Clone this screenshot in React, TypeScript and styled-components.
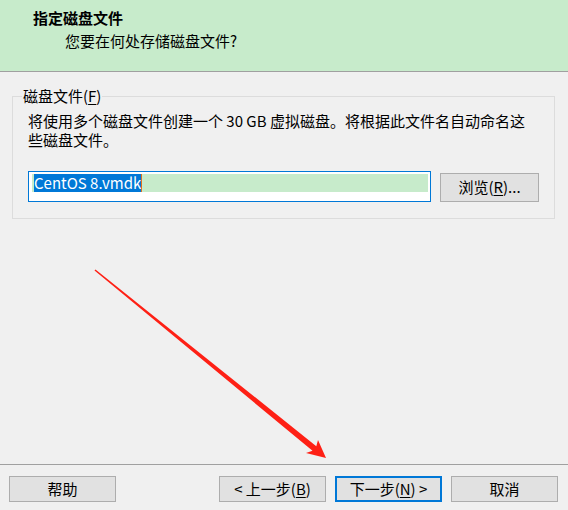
import React from "react";
import styled, { createGlobalStyle } from "styled-components";

const GlobalStyle = createGlobalStyle`
  html, body {
    margin: 0;
    padding: 0;
    background: #f0f0f0;
  }
  body {
    font-family: "Noto Sans CJK SC", "Noto Sans", sans-serif;
    font-size: 15px;
    color: #000;
  }
`;

const Window = styled.div`
  position: relative;
  width: 568px;
  height: 510px;
  display: flex;
  flex-direction: column;
  background: #f0f0f0;
  overflow: hidden;
`;

const Header = styled.div`
  height: 72px;
  box-sizing: border-box;
  padding: 8px 0 0 33px;
  background: #c7ebcb;
  border-bottom: 1px solid #a0a0a0;
`;

const Title = styled.div`
  font-weight: bold;
  line-height: 20px;
`;

const Subtitle = styled.div`
  margin: 3px 0 0 32px;
  line-height: 20px;
`;

const Body = styled.div`
  flex: 1;
  padding: 16px 13px 0 12px;
`;

const Group = styled.fieldset`
  margin: 0;
  padding: 7px 15px 16px 15px;
  border: 1px solid #dcdcdc;
  min-width: 0;
`;

const Legend = styled.legend`
  margin-left: -6px;
  padding: 0 1px;
  line-height: 16px;
`;

const Hotkey = styled.span`
  text-decoration: underline;
  text-underline-offset: 2px;
`;

const Info = styled.p`
  margin: 0;
  line-height: 19px;
`;

const FileRow = styled.div`
  display: flex;
  align-items: center;
  gap: 9px;
  margin-top: 22px;
`;

const PathBox = styled.div`
  flex: 1;
  height: 31px;
  box-sizing: border-box;
  border: 1px solid #0078d7;
  background: #fff;
  padding: 2px 2px 0 3px;
`;

const Highlight = styled.div`
  height: 18px;
  background: #c7ebcb;
  padding-left: 2px;
  display: flex;
`;

const Selected = styled.span`
  background: #0078d7;
  color: #fff;
  line-height: 18px;
  border-right: 1px solid #e07020;
  font-family: "Segoe UI", "Noto Sans CJK SC", sans-serif;
`;

const Button = styled.button<{ $primary?: boolean }>`
  width: 107px;
  height: 26px;
  box-sizing: border-box;
  padding: 0;
  font: inherit;
  line-height: 20px;
  color: #000;
  background: #e1e1e1;
  border: ${({ $primary }) => ($primary ? "2px solid #0078d7" : "1px solid #adadad")};
`;

const BrowseButton = styled(Button)`
  width: 99px;
  height: 29px;
  margin-top: 1px;
`;

const Footer = styled.div`
  height: 46px;
  box-sizing: border-box;
  border-top: 1px solid #a0a0a0;
  padding: 11px 10px 0 9px;
  display: flex;
  gap: 9px;
`;

const HelpButton = styled(Button)`
  margin-right: auto;
`;

const Annotation = styled.svg`
  position: absolute;
  left: 0;
  top: 0;
  pointer-events: none;
`;

export default function App() {
  return (
    <>
      <GlobalStyle />
      <Window>
        <Header>
          <Title>指定磁盘文件</Title>
          <Subtitle>您要在何处存储磁盘文件?</Subtitle>
        </Header>

        <Body>
          <Group>
            <Legend>
              磁盘文件(<Hotkey>F</Hotkey>)
            </Legend>
            <Info>
              将使用多个磁盘文件创建一个 30 GB 虚拟磁盘。将根据此文件名自动命名这些磁盘文件。
            </Info>
            <FileRow>
              <PathBox>
                <Highlight>
                  <Selected>CentOS 8.vmdk</Selected>
                </Highlight>
              </PathBox>
              <BrowseButton>
                浏览(<Hotkey>R</Hotkey>)...
              </BrowseButton>
            </FileRow>
          </Group>
        </Body>

        <Footer>
          <HelpButton>帮助</HelpButton>
          <Button>
            &lt; 上一步(<Hotkey>B</Hotkey>)
          </Button>
          <Button $primary>
            下一步(<Hotkey>N</Hotkey>) &gt;
          </Button>
          <Button>取消</Button>
        </Footer>

        <Annotation width="568" height="510" viewBox="0 0 568 510">
          <polygon
            fill="#fe2015"
            points="95.5,269.4 316.3,446.2 318,440 326,458 306,453 312.5,450.8 94.5,270.6"
          />
        </Annotation>
      </Window>
    </>
  );
}
